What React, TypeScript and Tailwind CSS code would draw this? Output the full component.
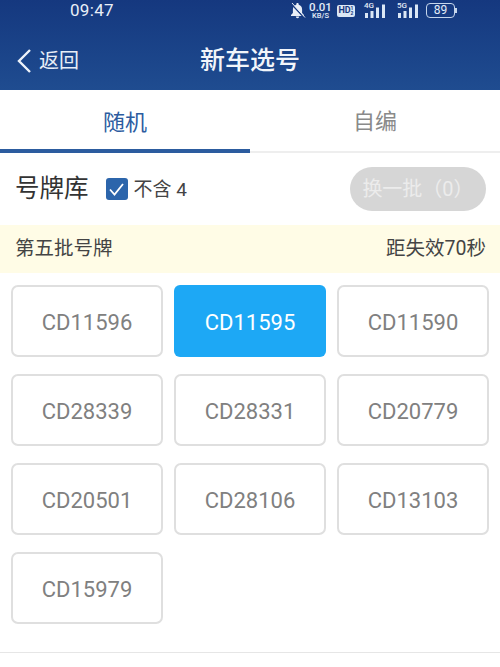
import React from "react";

const plates = ["CD11596","CD11595","CD11590","CD28339","CD28331","CD20779","CD20501","CD28106","CD13103","CD15979"];

function Signal({ label }: { label: string }) {
  return (
    <div className="relative w-[22px] h-[17px]">
      <span className="absolute left-0 top-0 text-[8px] leading-[8px] font-medium text-[#e3ecf7]">{label}</span>
      <svg className="absolute left-0 top-0" width="22" height="17" viewBox="0 0 22 17" fill="#dbe7f5">
        <rect x="1" y="11" width="3" height="5" />
        <rect x="6.500" y="9" width="3" height="7" />
        <rect x="12" y="5.500" width="3" height="10.500" />
        <rect x="18" y="2.500" width="3" height="13.500" />
      </svg>
    </div>
  );
}

export default function App() {
  return (
    <div className="w-[500px] h-[667px] overflow-hidden bg-white flex flex-col font-['Roboto','Noto_Sans_CJK_SC',sans-serif]">
      <div className="h-[90px] shrink-0 flex flex-col text-white bg-gradient-to-b from-[#15387f] to-[#1f4c90]">
        <div className="h-[21px] flex items-center">
          <span className="ml-[70px] w-[46px] text-[17px] leading-none tracking-[0.3px] text-[#e8eef7]">09:47</span>
          <div className="ml-[173px] flex items-center text-[#e3ecf7]">
            <svg width="17" height="17" viewBox="0 0 17 17" fill="#e8eef7">
              <path d="M8.500 1C7.800 1 7.300 1.500 7.300 2.200v.5C5 3.300 3.900 5.200 3.900 7.400V11L2 13v1h13v-1l-1.900-2V7.400c0-2.200-1.100-4.100-3.400-4.700v-.5C9.700 1.500 9.200 1 8.500 1zM6.800 14.500a1.700 1.700 0 0 0 3.400 0z" />
              <path d="M2 1.500 L15.500 16" stroke="#15387f" strokeWidth="1.600" />
              <path d="M3 1 L16 15.500" stroke="#e8eef7" strokeWidth="1" />
            </svg>
            <div className="ml-[3px] flex flex-col items-center w-[23px] h-[17px] justify-between">
              <span className="text-[11.500px] font-medium leading-[10px]">0.01</span>
              <span className="text-[7.500px] font-medium leading-[6px]">KB/S</span>
            </div>
            <div className="ml-[5px] w-[18px] h-[12px] rounded-[2px] bg-[#dbe7f5] text-[#15387f] flex items-center justify-center font-bold leading-none">
              <span className="text-[9px]">HD</span>
              <span className="w-[3px] flex flex-col text-[5px] leading-[5px]">
                <span>1</span>
                <span>2</span>
              </span>
            </div>
            <div className="ml-[9px]"><Signal label="4G" /></div>
            <div className="ml-[11px]"><Signal label="5G" /></div>
            <div className="ml-[7px] w-[29px] h-[15px] rounded-[4px] border border-[#c6d6ec] text-[12px] leading-[13px] text-center">89</div>
            <div className="w-[1.500px] h-[5px] bg-[#c6d6ec]" />
          </div>
        </div>
        <div className="flex-1 flex items-center relative pt-[10px]">
          <svg className="ml-[16px]" width="16" height="26" viewBox="0 0 16 26" fill="none" stroke="#eef3fa" strokeWidth="2.400">
            <path d="M14 2 L3 13 L14 24" />
          </svg>
          <span className="ml-[7px] text-[20px] leading-none text-[#e8eef7]">返回</span>
          <span className="absolute left-0 right-0 text-center text-[25px] font-medium leading-none text-[#f2f5fa]">新车选号</span>
        </div>
      </div>

      <div className="h-[63px] shrink-0 flex border-b-2 border-[#eeeeee] text-[22px]">
        <div className="w-[250px] -mb-[2px] flex items-center justify-center border-b-4 border-[#2c5c9f] text-[#2c5c9f] pt-[5px]">随机</div>
        <div className="flex-1 flex items-center justify-center text-[#8a8a8a] pt-[2px]">自编</div>
      </div>

      <div className="h-[72px] shrink-0 flex items-center pl-[15px] pr-[14px]">
        <span className="text-[24.500px] leading-none text-[#333333]">号牌库</span>
        <div className="ml-[17px] w-[22px] h-[22px] rounded-[3px] bg-[#2c65ab] flex items-center justify-center">
          <svg width="17" height="15" viewBox="0 0 17 15" fill="none" stroke="#ffffff" strokeWidth="1.800">
            <path d="M2 7.500 L6.500 12.500 L15 2" />
          </svg>
        </div>
        <span className="ml-[6px] text-[19px] leading-none text-[#444444]">不含 4</span>
        <div className="ml-auto w-[136px] h-[44px] rounded-full bg-[#d6d6d6] flex items-center justify-center text-[20px] text-[#ececec]">换一批（0）</div>
      </div>

      <div className="h-[48px] shrink-0 bg-[#fffce6] flex items-center justify-between pl-[15px] pr-[14px] text-[19.500px] leading-none text-[#444444]">
        <span>第五批号牌</span>
        <span>距失效70秒</span>
      </div>

      <div className="grid grid-cols-3 gap-x-[11px] gap-y-[17px] px-[11px] pt-[12px]">
        {plates.map((p, i) => (
          <div
            key={p}
            className={
              i === 1
                ? "h-[72px] rounded-[6px] bg-[#1da8f5] text-white flex items-center justify-center text-[22px] pt-[2px]"
                : "h-[72px] rounded-[7px] border-2 border-[#dfdfdf] text-[#808080] flex items-center justify-center text-[22px] pt-[2px]"
            }
          >
            {p}
          </div>
        ))}
      </div>

      <div className="mt-[28px] border-t border-[#e6e6e6]" />
    </div>
  );
}
